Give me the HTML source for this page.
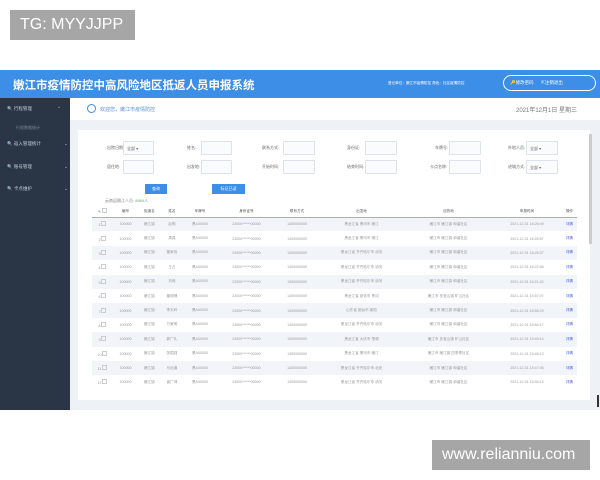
<!DOCTYPE html>
<html><head><meta charset="utf-8"><style>
*{margin:0;padding:0;box-sizing:border-box}
body{width:600px;height:480px;background:#fff;position:relative;overflow:hidden;font-family:"Liberation Sans","Noto Sans CJK SC",sans-serif}
.a{position:absolute}
.lbl{background:#a6a6a6;color:#fff;font-size:16px;line-height:30px;padding-left:10px}
.hdr{left:0;top:70px;width:600px;height:28px;background:#3c8ee6}
.side{left:0;top:98px;width:70px;height:312px;background:#2a3545}
.main{left:70px;top:98px;width:530px;height:312px;background:#eef1f6}
.si{color:#c8d0dc;font-size:4.5px;left:7px}
.inp{background:#fafbfd;border:1px solid #dde2ea;height:14px;border-radius:1px}
.fl{font-size:4px;color:#666}
table{border-collapse:collapse;font-size:3.6px;color:#999;position:absolute;left:92px;top:206px;width:485px}
td{height:14.4px;text-align:center;white-space:nowrap}
tr:nth-child(even) td{background:#f1f4f9}
tr.h td{height:11px;color:#555;background:#fff;border-bottom:1px solid #aac}
.lk{color:#4b5fd6}
.cb{display:inline-block;width:5px;height:5px;border:1px solid #ccc}
</style></head><body>
<div class="a lbl" style="left:10px;top:10px;width:125px;height:30px">TG: MYYJJPP</div>
<div class="a lbl" style="left:432px;top:440px;width:158px;height:30px;font-size:16px">www.relianniu.com</div>

<div class="a hdr">
 <div class="a" style="left:13px;top:7px;color:#fff;font-size:11.5px;font-weight:bold">嫩江市疫情防控中高风险地区抵返人员申报系统</div>
 <div class="a" style="left:388px;top:11px;color:#fff;font-size:3.6px">登记单位：嫩江市疫情防控 角色：社区疫情防控</div>
 <div class="a" style="left:503px;top:5px;width:93px;height:16px;border:1px solid #fff;border-radius:8px;color:#fff;font-size:4.5px;line-height:14px;padding-left:6px">🔑修改密码 &nbsp;&nbsp;&nbsp;&nbsp; ⇱注销退出</div>
</div>
<div class="a side">
 <div class="a si" style="top:8px">🔍 行程管理 <span style="position:absolute;left:50px">⌃</span></div>
 <div class="a si" style="top:27px;left:16px;color:#7d8898;font-size:4px">行程数据统计</div>
 <div class="a si" style="top:43px">🔍 返入管理统计 <span style="position:absolute;left:57px">⌄</span></div>
 <div class="a si" style="top:66px">🔍 账号管理 <span style="position:absolute;left:57px">⌄</span></div>
 <div class="a si" style="top:88px">🔍 卡点维护 <span style="position:absolute;left:57px">⌄</span></div>
</div>
<div class="a main">
 <div class="a" style="left:0;top:0;width:530px;height:22px;background:#fff"></div>
 <div class="a" style="left:17px;top:6px;width:9px;height:9px;border:1px solid #3c8ee6;border-radius:50%"></div>
 <div class="a" style="left:30px;top:8px;font-size:5px;color:#5a8fd6">欢迎您，嫩江市疫情防控</div>
 <div class="a" style="left:446px;top:7px;font-size:6px;color:#777">2021年12月1日 星期三</div>
 <div class="a" style="left:8px;top:32px;width:512px;height:270px;background:#fff"></div>
 <div class="a" style="left:519px;top:36px;width:3px;height:110px;background:#ccc"></div>
</div>
<!-- form -->
<div class="a fl" style="left:107px;top:145px">出院日期:</div><div class="a inp" style="left:123px;top:141px;width:31px"><span class="fl" style="position:absolute;left:3px;top:4px">全部 ▾</span></div>
<div class="a fl" style="left:187px;top:145px">姓名:</div><div class="a inp" style="left:201px;top:141px;width:31px"></div>
<div class="a fl" style="left:262px;top:145px">联系方式:</div><div class="a inp" style="left:283px;top:141px;width:32px"></div>
<div class="a fl" style="left:347px;top:145px">身份证:</div><div class="a inp" style="left:365px;top:141px;width:32px"></div>
<div class="a fl" style="left:435px;top:145px">车牌号:</div><div class="a inp" style="left:449px;top:141px;width:32px"></div>
<div class="a fl" style="left:508px;top:145px">外地人员:</div><div class="a inp" style="left:526px;top:141px;width:32px"><span class="fl" style="position:absolute;left:3px;top:4px">全部 ▾</span></div>
<div class="a fl" style="left:107px;top:164px">居住地:</div><div class="a inp" style="left:123px;top:160px;width:31px"></div>
<div class="a fl" style="left:187px;top:164px">出发地:</div><div class="a inp" style="left:201px;top:160px;width:31px"></div>
<div class="a fl" style="left:262px;top:164px">开始时间:</div><div class="a inp" style="left:283px;top:160px;width:32px"></div>
<div class="a fl" style="left:347px;top:164px">结束时间:</div><div class="a inp" style="left:365px;top:160px;width:32px"></div>
<div class="a fl" style="left:430px;top:164px">卡点名称:</div><div class="a inp" style="left:449px;top:160px;width:32px"></div>
<div class="a fl" style="left:508px;top:164px">进城方式:</div><div class="a inp" style="left:526px;top:160px;width:32px"><span class="fl" style="position:absolute;left:3px;top:4px">全部 ▾</span></div>
<div class="a" style="left:145px;top:184px;width:22px;height:10px;background:#3c8ee6;color:#fff;font-size:4px;text-align:center;line-height:10px">查询</div>
<div class="a" style="left:212px;top:184px;width:33px;height:10px;background:#3c8ee6;color:#fff;font-size:4px;text-align:center;line-height:10px">标记已读</div>
<div class="a" style="left:105px;top:198px;font-size:4px;color:#888">云南返嫩江人员: <span style="color:#6a6">8984人</span></div>
<table>
<tr class="h"><td>✎ <span class="cb"></span></td><td>编号</td><td>街道名</td><td>姓名</td><td>车牌号</td><td>身份证号</td><td>联系方式</td><td>出发地</td><td>目的地</td><td>申报时间</td><td>操作</td></tr>
<tr><td>1 <span class="cb"></span></td><td>100000</td><td>嫩江镇</td><td>赵明</td><td>黑A00000</td><td>23000******00000</td><td>1300000000</td><td>黑龙江省 黑河市 嫩江</td><td>嫩江市 嫩江镇 和谐社区</td><td>2021-12-01 16:26:49</td><td class="lk">详情</td></tr>
<tr><td>2 <span class="cb"></span></td><td>100000</td><td>嫩江镇</td><td>周强</td><td>黑A00000</td><td>23000******00000</td><td>1300000000</td><td>黑龙江省 黑河市 嫩江</td><td>嫩江市 嫩江镇 和谐社区</td><td>2021-12-01 16:25:57</td><td class="lk">详情</td></tr>
<tr><td>3 <span class="cb"></span></td><td>100000</td><td>嫩江镇</td><td>董家伟</td><td>黑A00000</td><td>23000******00000</td><td>1300000000</td><td>黑龙江省 齐齐哈尔市 讷河</td><td>嫩江市 嫩江镇 和谐社区</td><td>2021-12-01 16:25:37</td><td class="lk">详情</td></tr>
<tr><td>4 <span class="cb"></span></td><td>100000</td><td>嫩江镇</td><td>王占</td><td>黑A00000</td><td>23000******00000</td><td>1300000000</td><td>黑龙江省 齐齐哈尔市 讷河</td><td>嫩江市 嫩江镇 和谐社区</td><td>2021-12-01 16:22:58</td><td class="lk">详情</td></tr>
<tr><td>5 <span class="cb"></span></td><td>100000</td><td>嫩江镇</td><td>刘莉</td><td>黑A00000</td><td>23000******00000</td><td>1300000000</td><td>黑龙江省 齐齐哈尔市 讷河</td><td>嫩江市 嫩江镇 和谐社区</td><td>2021-12-01 16:21:42</td><td class="lk">详情</td></tr>
<tr><td>6 <span class="cb"></span></td><td>100000</td><td>嫩江镇</td><td>董明博</td><td>黑A00000</td><td>23000******00000</td><td>1300000000</td><td>黑龙江省 绥化市 青冈</td><td>嫩江市 多宝山镇 矿山社区</td><td>2021-12-01 15:57:07</td><td class="lk">详情</td></tr>
<tr><td>7 <span class="cb"></span></td><td>100000</td><td>嫩江镇</td><td>李天岭</td><td>黑A00000</td><td>23000******00000</td><td>1300000000</td><td>山东省 烟台市 莱阳</td><td>嫩江市 嫩江镇 和谐社区</td><td>2021-12-01 15:55:29</td><td class="lk">详情</td></tr>
<tr><td>8 <span class="cb"></span></td><td>100000</td><td>嫩江镇</td><td>万家明</td><td>黑A00000</td><td>23000******00000</td><td>1300000000</td><td>黑龙江省 齐齐哈尔市 讷河</td><td>嫩江市 嫩江镇 和谐社区</td><td>2021-12-01 15:54:17</td><td class="lk">详情</td></tr>
<tr><td>9 <span class="cb"></span></td><td>100000</td><td>嫩江镇</td><td>郭广礼</td><td>黑A00000</td><td>23000******00000</td><td>1300000000</td><td>黑龙江省 大庆市 肇源</td><td>嫩江市 多宝山镇 矿山社区</td><td>2021-12-01 15:49:14</td><td class="lk">详情</td></tr>
<tr><td>10 <span class="cb"></span></td><td>100000</td><td>嫩江镇</td><td>张国强</td><td>黑A00000</td><td>23000******00000</td><td>1300000000</td><td>黑龙江省 黑河市 嫩江</td><td>嫩江市 嫩江镇 四季青社区</td><td>2021-12-01 15:48:13</td><td class="lk">详情</td></tr>
<tr><td>11 <span class="cb"></span></td><td>100000</td><td>嫩江镇</td><td>马远道</td><td>黑A00000</td><td>23000******00000</td><td>1300000000</td><td>黑龙江省 齐齐哈尔市 北安</td><td>嫩江市 嫩江镇 和谐社区</td><td>2021-12-01 15:47:46</td><td class="lk">详情</td></tr>
<tr><td>12 <span class="cb"></span></td><td>100000</td><td>嫩江镇</td><td>谢广坤</td><td>黑A00000</td><td>23000******00000</td><td>1300000000</td><td>黑龙江省 齐齐哈尔市 讷河</td><td>嫩江市 嫩江镇 和谐社区</td><td>2021-12-01 15:46:12</td><td class="lk">详情</td></tr>
</table>
<div class="a" style="left:597px;top:395px;width:2px;height:12px;background:#333"></div>
</body></html>
